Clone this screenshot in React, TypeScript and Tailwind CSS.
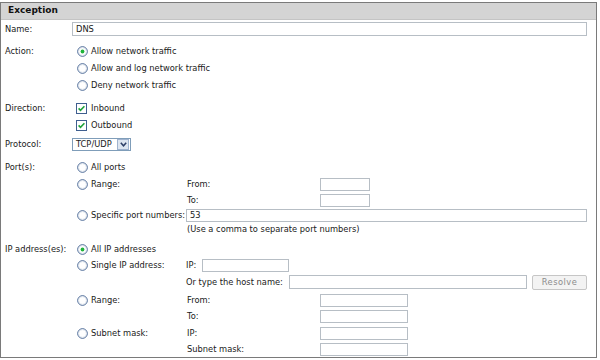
import React from 'react';

const Radio = ({ checked = false }: { checked?: boolean }) => (
  <svg width="11" height="11" viewBox="0 0 11 11" className="shrink-0">
    <circle cx="5.5" cy="5.5" r="4.8" fill="#fff" stroke="#3f5f8f" strokeWidth="1" />
    <circle cx="5.5" cy="5.5" r="3.8" fill="none" stroke="#dfe6ee" strokeWidth="0.8" />
    {checked && <circle cx="5.5" cy="5.5" r="1.9" fill="#1fb33a" />}
  </svg>
);

const Check = () => (
  <svg width="11" height="11" viewBox="0 0 11 11" className="shrink-0">
    <rect x="0.5" y="0.5" width="10" height="10" fill="#fff" stroke="#3f5f8f" />
    <path d="M2.6 5.4 L4.5 7.4 L8.4 3.2" fill="none" stroke="#1fa33a" strokeWidth="1.6" />
  </svg>
);

const Field = ({ className = '', value = '' }: { className?: string; value?: string }) => (
  <div className={`h-[13px] border border-[#b7bec5] bg-white flex items-center px-[3px] text-[8.3px] ${className}`}>
    {value}
  </div>
);

const Option = ({ label, checked = false, className = '' }: { label: string; checked?: boolean; className?: string }) => (
  <div className={`flex items-center gap-[3px] pl-[5px] ${className}`}>
    <Radio checked={checked} />
    <span>{label}</span>
  </div>
);

export default function App() {
  return (
    <div className="w-[600px] h-[360px] bg-white pt-[2px] text-[8.3px] text-[#1a1a1a]" style={{ fontFamily: '"DejaVu Sans", Verdana, sans-serif' }}>
      <div className="w-[597px] h-[356px] border border-[#7a7a7a] flex flex-col">
        <div className="h-[17px] bg-[#d4d4d4] border-b border-[#c4c4c4] flex items-center pl-[7px] text-[9px] font-bold text-[#111]">
          Exception
        </div>

        {/* Name */}
        <div className="flex mt-[1px] h-[16px] items-center">
          <div className="w-[71px] pl-[4px]">Name:</div>
          <Field className="w-[515px] h-[14px]" value="DNS" />
        </div>

        {/* Action */}
        <div className="flex mt-[6px]">
          <div className="w-[71px] pl-[4px] h-[17px] flex items-center">Action:</div>
          <div className="flex flex-col">
            <Option className="h-[17px]" label="Allow network traffic" checked />
            <Option className="h-[17px]" label="Allow and log network traffic" />
            <Option className="h-[17px]" label="Deny network traffic" />
          </div>
        </div>

        {/* Direction */}
        <div className="flex mt-[6px]">
          <div className="w-[71px] pl-[4px] h-[17px] flex items-center">Direction:</div>
          <div className="flex flex-col">
            <div className="h-[17px] flex items-center gap-[4px] pl-[4px]"><Check /><span>Inbound</span></div>
            <div className="h-[17px] flex items-center gap-[4px] pl-[4px]"><Check /><span>Outbound</span></div>
          </div>
        </div>

        {/* Protocol */}
        <div className="flex mt-[2px] h-[17px] items-center">
          <div className="w-[71px] pl-[4px]">Protocol:</div>
          <div className="w-[59px] h-[13px] border border-[#7f9db9] bg-white flex items-center">
            <span className="flex-1 pl-[3px]">TCP/UDP</span>
            <div className="w-[12px] h-[11px] mr-[1px] bg-[#dde5f0] border border-[#9fb3cf] flex items-center justify-center">
              <svg width="7" height="5" viewBox="0 0 7 5">
                <path d="M0.8 0.8 L3.5 3.8 L6.2 0.8" fill="none" stroke="#2c3e66" strokeWidth="1.5" />
              </svg>
            </div>
          </div>
        </div>

        {/* Ports */}
        <div className="flex mt-[6px]">
          <div className="w-[71px] pl-[4px] h-[17px] flex items-center">Port(s):</div>
          <div className="flex flex-col w-[515px]">
            <Option className="h-[17px]" label="All ports" />
            <div className="flex">
              <Option className="w-[115px] h-[16px] self-start" label="Range:" />
              <div className="flex flex-col">
                <div className="flex h-[16px] items-center">
                  <span className="w-[133px]">From:</span>
                  <Field className="w-[50px]" />
                </div>
                <div className="flex h-[16px] items-center">
                  <span className="w-[133px]">To:</span>
                  <Field className="w-[50px]" />
                </div>
              </div>
            </div>
            <div className="flex h-[15px] items-center">
              <Option className="w-[114px]" label="Specific port numbers:" />
              <Field className="flex-1" value="53" />
            </div>
            <div className="h-[12px] flex items-center pl-[115px]">(Use a comma to separate port numbers)</div>
          </div>
        </div>

        {/* IP addresses */}
        <div className="flex mt-[6px]">
          <div className="w-[71px] pl-[4px] h-[16px] flex items-center">IP address(es):</div>
          <div className="flex flex-col w-[515px]">
            <Option className="h-[16px]" label="All IP addresses" checked />
            <div className="flex">
              <Option className="w-[115px] h-[17px] self-start" label="Single IP address:" />
              <div className="flex flex-col flex-1">
                <div className="flex h-[17px] items-center">
                  <span className="w-[16px]">IP:</span>
                  <Field className="w-[87px] h-[12px]" />
                </div>
                <div className="flex h-[16px] items-center">
                  <span className="w-[103px]">Or type the host name:</span>
                  <Field className="w-[238px] h-[14px]" />
                  <div className="ml-[5px] w-[55px] h-[15px] rounded-[2px] border border-[#c6c6c6] bg-[#f3f3f3] text-[#8c8c8c] flex items-center justify-center tracking-[0.5px]">
                    Resolve
                  </div>
                </div>
              </div>
            </div>
            <div className="flex mt-[2px]">
              <Option className="w-[115px] h-[16px] self-start" label="Range:" />
              <div className="flex flex-col">
                <div className="flex h-[16px] items-center">
                  <span className="w-[133px]">From:</span>
                  <Field className="w-[88px]" />
                </div>
                <div className="flex h-[16px] items-center">
                  <span className="w-[133px]">To:</span>
                  <Field className="w-[88px]" />
                </div>
              </div>
            </div>
            <div className="flex mt-[1px]">
              <Option className="w-[115px] h-[16px] self-start" label="Subnet mask:" />
              <div className="flex flex-col">
                <div className="flex h-[16px] items-center">
                  <span className="w-[133px]">IP:</span>
                  <Field className="w-[88px]" />
                </div>
                <div className="flex h-[16px] items-center">
                  <span className="w-[133px]">Subnet mask:</span>
                  <Field className="w-[88px]" />
                </div>
              </div>
            </div>
          </div>
        </div>
      </div>
    </div>
  );
}
